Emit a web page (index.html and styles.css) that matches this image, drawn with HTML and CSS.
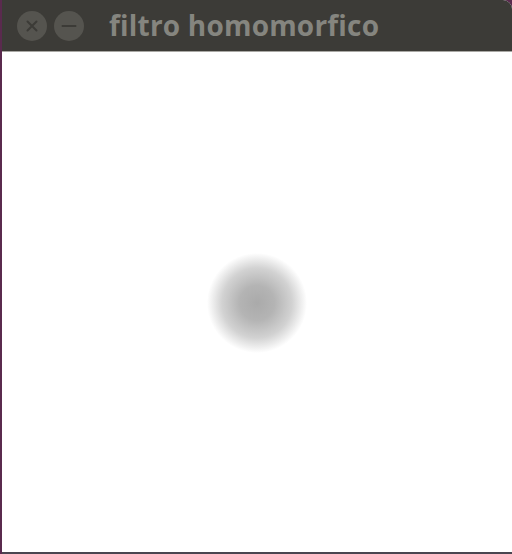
FILE: index.html
```html
<!DOCTYPE html>
<html>
<head>
<meta charset="utf-8">
<link rel="stylesheet" href="styles.css">
</head>
<body>
<div class="window">
  <div class="titlebar">
    <div class="buttons">
      <span class="btn">
        <svg width="30" height="30" viewBox="0 0 30 30"><path d="M10.5 10.5 L19.5 19.5 M19.5 10.5 L10.5 19.5" stroke="#3c3b37" stroke-width="2" stroke-linecap="round"/></svg>
      </span>
      <span class="btn">
        <svg width="30" height="30" viewBox="0 0 30 30"><path d="M8.5 15 H21.5" stroke="#3c3b37" stroke-width="2" stroke-linecap="round"/></svg>
      </span>
    </div>
    <div class="title">filtro homomorfico</div>
  </div>
  <div class="content">
    <div class="blob"></div>
  </div>
</div>
</body>
</html>
```
FILE: styles.css
```css
html, body {
  margin: 0;
  padding: 0;
  background: #5a2a4e;
}
body {
  width: 512px;
  height: 554px;
  overflow: hidden;
}
.window {
  width: 510px;
  height: 552px;
  margin-left: 2px;
  background: #ffffff;
  border-top-right-radius: 9px;
  overflow: hidden;
  display: flex;
  flex-direction: column;
  border-bottom: 2px solid #4a4550;
}
.titlebar {
  flex: none;
  background: #3c3b37;
  border-bottom: 1px solid #a9a8a4;
  display: flex;
  align-items: center;
  box-sizing: border-box;
  height: 52px;
}
.buttons {
  display: flex;
  gap: 7px;
  margin-left: 15px;
}
.btn {
  width: 30px;
  height: 30px;
  border-radius: 50%;
  background: #55544f;
  display: block;
}
.btn svg {
  display: block;
}
.title {
  margin-left: 25px;
  font-family: "Open Sans", "DejaVu Sans", sans-serif;
  font-weight: 700;
  font-size: 28px;
  color: #85857f;
  letter-spacing: 0.2px;
  margin-top: -2px;
}
.content {
  flex: 1;
  position: relative;
}
.blob {
  position: absolute;
  left: 205px;
  top: 201px;
  width: 100px;
  height: 100px;
  border-radius: 50%;
  background: radial-gradient(circle closest-side, #aaaaaa 0%, #b4b4b4 35%, #d2d2d2 70%, #ffffff 100%);
}
```
